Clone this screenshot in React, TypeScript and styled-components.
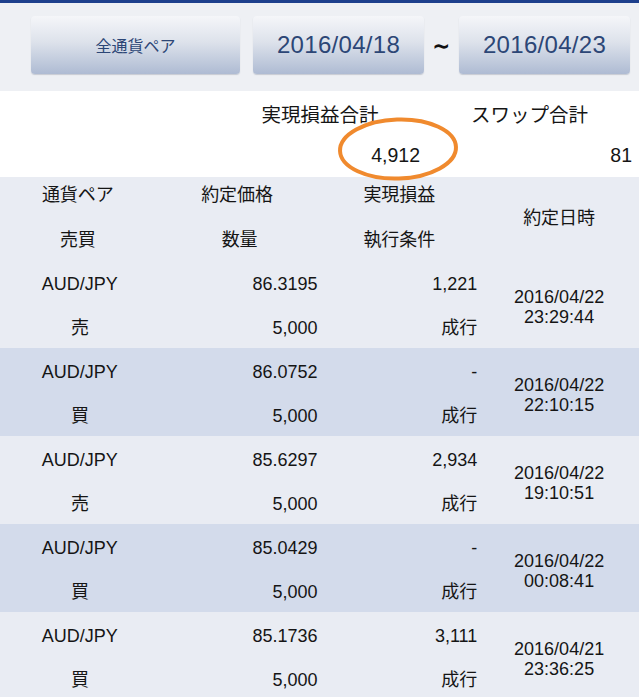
import React from "react";
import styled, { createGlobalStyle } from "styled-components";

const GlobalStyle = createGlobalStyle`
  html, body {
    margin: 0;
    padding: 0;
    background: #e9ecf3;
  }
  body {
    font-family: "Liberation Sans", "Noto Sans CJK JP", Arial, sans-serif;
    color: #151515;
  }
`;

const Page = styled.div`
  width: 639px;
  min-height: 697px;
  overflow: hidden;
  background: #e9ecf3;
`;

const TopBar = styled.div`
  height: 3px;
  background: #1d3f8c;
`;

const Toolbar = styled.div`
  height: 88px;
  box-sizing: border-box;
  padding: 13px 0 0 31px;
  background: #eef0f4;
  display: flex;
  align-items: flex-start;
`;

const Button = styled.div<{ $w: number; $fs: number }>`
  width: ${(p) => p.$w}px;
  height: 58px;
  box-sizing: border-box;
  border-radius: 4px;
  background: linear-gradient(to bottom, #f5f6f9 0%, #dde2eb 45%, #aebbd3 100%);
  box-shadow: 0 1px 1px rgba(80, 90, 110, 0.25);
  display: flex;
  align-items: center;
  justify-content: center;
  font-size: ${(p) => p.$fs}px;
  color: #2c4676;
  letter-spacing: ${(p) => (p.$fs > 20 ? "0.3px" : "0")};
`;

const Gap = styled.div<{ $w: number }>`
  width: ${(p) => p.$w}px;
  height: 58px;
  display: flex;
  align-items: center;
  justify-content: center;
`;

const Tilde = styled.span`
  font-family: "DejaVu Sans", sans-serif;
  font-size: 24px;
  font-weight: bold;
  color: #111;
  margin-top: 2px;
  margin-left: -1px;
  transform: scaleX(0.9);
`;

const Summary = styled.div`
  position: relative;
  height: 86px;
  box-sizing: border-box;
  padding-top: 1px;
  background: #ffffff;
  display: grid;
  grid-template-columns: 220px 200px 1fr;
  grid-template-rows: 42px 42px;
  font-size: 19.5px;
`;

const SumCell = styled.div<{ $align: "center" | "right"; $col: number; $pr?: number }>`
  grid-column: ${(p) => p.$col};
  display: flex;
  align-items: center;
  justify-content: ${(p) => (p.$align === "center" ? "center" : "flex-end")};
  padding-right: ${(p) => p.$pr ?? 0}px;
  color: #151515;
`;

const Circle = styled.svg`
  position: absolute;
  left: 336px;
  top: 25px;
  width: 124px;
  height: 66px;
  overflow: visible;
  pointer-events: none;
`;

const Table = styled.div`
  display: flex;
  flex-direction: column;
`;

const Row = styled.div<{ $shade?: boolean; $header?: boolean }>`
  height: ${(p) => (p.$header ? 83 : 88)}px;
  box-sizing: border-box;
  padding: ${(p) => (p.$header ? "0 0 2px" : "2px 0 0")};
  background: ${(p) => (p.$shade ? "#d3dbeb" : "#e9ecf3")};
  display: grid;
  grid-template-columns: repeat(4, 1fr);
  grid-template-rows: ${(p) => (p.$header ? "36px 45px" : "44px 42px")};
  font-size: 18px;
`;

const Cell = styled.div<{ $align: "center" | "right"; $col: number; $row: number }>`
  grid-column: ${(p) => p.$col};
  grid-row: ${(p) => p.$row};
  text-align: ${(p) => p.$align};
  padding-right: ${(p) => (p.$align === "right" ? 2 : 0)}px;
  line-height: 44px;
  align-self: start;
`;

const HeadCell = styled.div<{ $col: number; $row: number; $shift?: number }>`
  grid-column: ${(p) => p.$col};
  grid-row: ${(p) => p.$row};
  text-align: center;
  line-height: 36px;
  align-self: ${(p) => (p.$row === 2 ? "end" : "start")};
  margin-left: ${(p) => p.$shift ?? 0}px;
`;

const DateCell = styled.div<{ $offset?: number }>`
  grid-column: 4;
  grid-row: 1 / span 2;
  align-self: center;
  justify-self: center;
  text-align: center;
  line-height: 20px;
  margin-top: ${(p) => p.$offset ?? 0}px;
`;

type Trade = {
  pair: string;
  price: string;
  pl: string;
  side: string;
  qty: string;
  cond: string;
  date: string;
  time: string;
};

const trades: Trade[] = [
  { pair: "AUD/JPY", price: "86.3195", pl: "1,221", side: "売", qty: "5,000", cond: "成行", date: "2016/04/22", time: "23:29:44" },
  { pair: "AUD/JPY", price: "86.0752", pl: "-", side: "買", qty: "5,000", cond: "成行", date: "2016/04/22", time: "22:10:15" },
  { pair: "AUD/JPY", price: "85.6297", pl: "2,934", side: "売", qty: "5,000", cond: "成行", date: "2016/04/22", time: "19:10:51" },
  { pair: "AUD/JPY", price: "85.0429", pl: "-", side: "買", qty: "5,000", cond: "成行", date: "2016/04/22", time: "00:08:41" },
  { pair: "AUD/JPY", price: "85.1736", pl: "3,111", side: "買", qty: "5,000", cond: "成行", date: "2016/04/21", time: "23:36:25" },
];

export default function App() {
  return (
    <Page>
      <GlobalStyle />
      <TopBar />
      <Toolbar>
        <Button $w={209} $fs={16}>全通貨ペア</Button>
        <Gap $w={13} />
        <Button $w={171} $fs={24}>2016/04/18</Button>
        <Gap $w={35}>
          <Tilde>∼</Tilde>
        </Gap>
        <Button $w={171} $fs={24}>2016/04/23</Button>
      </Toolbar>
      <Summary>
        <SumCell $col={2} $align="center">実現損益合計</SumCell>
        <SumCell $col={3} $align="center">スワップ合計</SumCell>
        <SumCell $col={2} $align="right">4,912</SumCell>
        <SumCell $col={3} $align="right" $pr={7}>81</SumCell>
        <Circle viewBox="0 0 124 66">
          <ellipse cx="62" cy="33" rx="58" ry="29.5" fill="none" stroke="#f08a2e" strokeWidth="4" transform="rotate(-2 62 33)" />
        </Circle>
      </Summary>
      <Table>
        <Row $header>
          <HeadCell $col={1} $row={1} $shift={-4}>通貨ペア</HeadCell>
          <HeadCell $col={2} $row={1} $shift={-5}>約定価格</HeadCell>
          <HeadCell $col={3} $row={1}>実現損益</HeadCell>
          <HeadCell $col={1} $row={2} $shift={-4}>売買</HeadCell>
          <HeadCell $col={2} $row={2}>数量</HeadCell>
          <HeadCell $col={3} $row={2}>執行条件</HeadCell>
          <DateCell>約定日時</DateCell>
        </Row>
        {trades.map((t, i) => (
          <Row key={i} $shade={i % 2 === 1}>
            <Cell $col={1} $row={1} $align="center">{t.pair}</Cell>
            <Cell $col={2} $row={1} $align="right">{t.price}</Cell>
            <Cell $col={3} $row={1} $align="right">{t.pl}</Cell>
            <Cell $col={1} $row={2} $align="center">{t.side}</Cell>
            <Cell $col={2} $row={2} $align="right">{t.qty}</Cell>
            <Cell $col={3} $row={2} $align="right">{t.cond}</Cell>
            <DateCell $offset={4}>
              {t.date}
              <br />
              {t.time}
            </DateCell>
          </Row>
        ))}
      </Table>
    </Page>
  );
}
